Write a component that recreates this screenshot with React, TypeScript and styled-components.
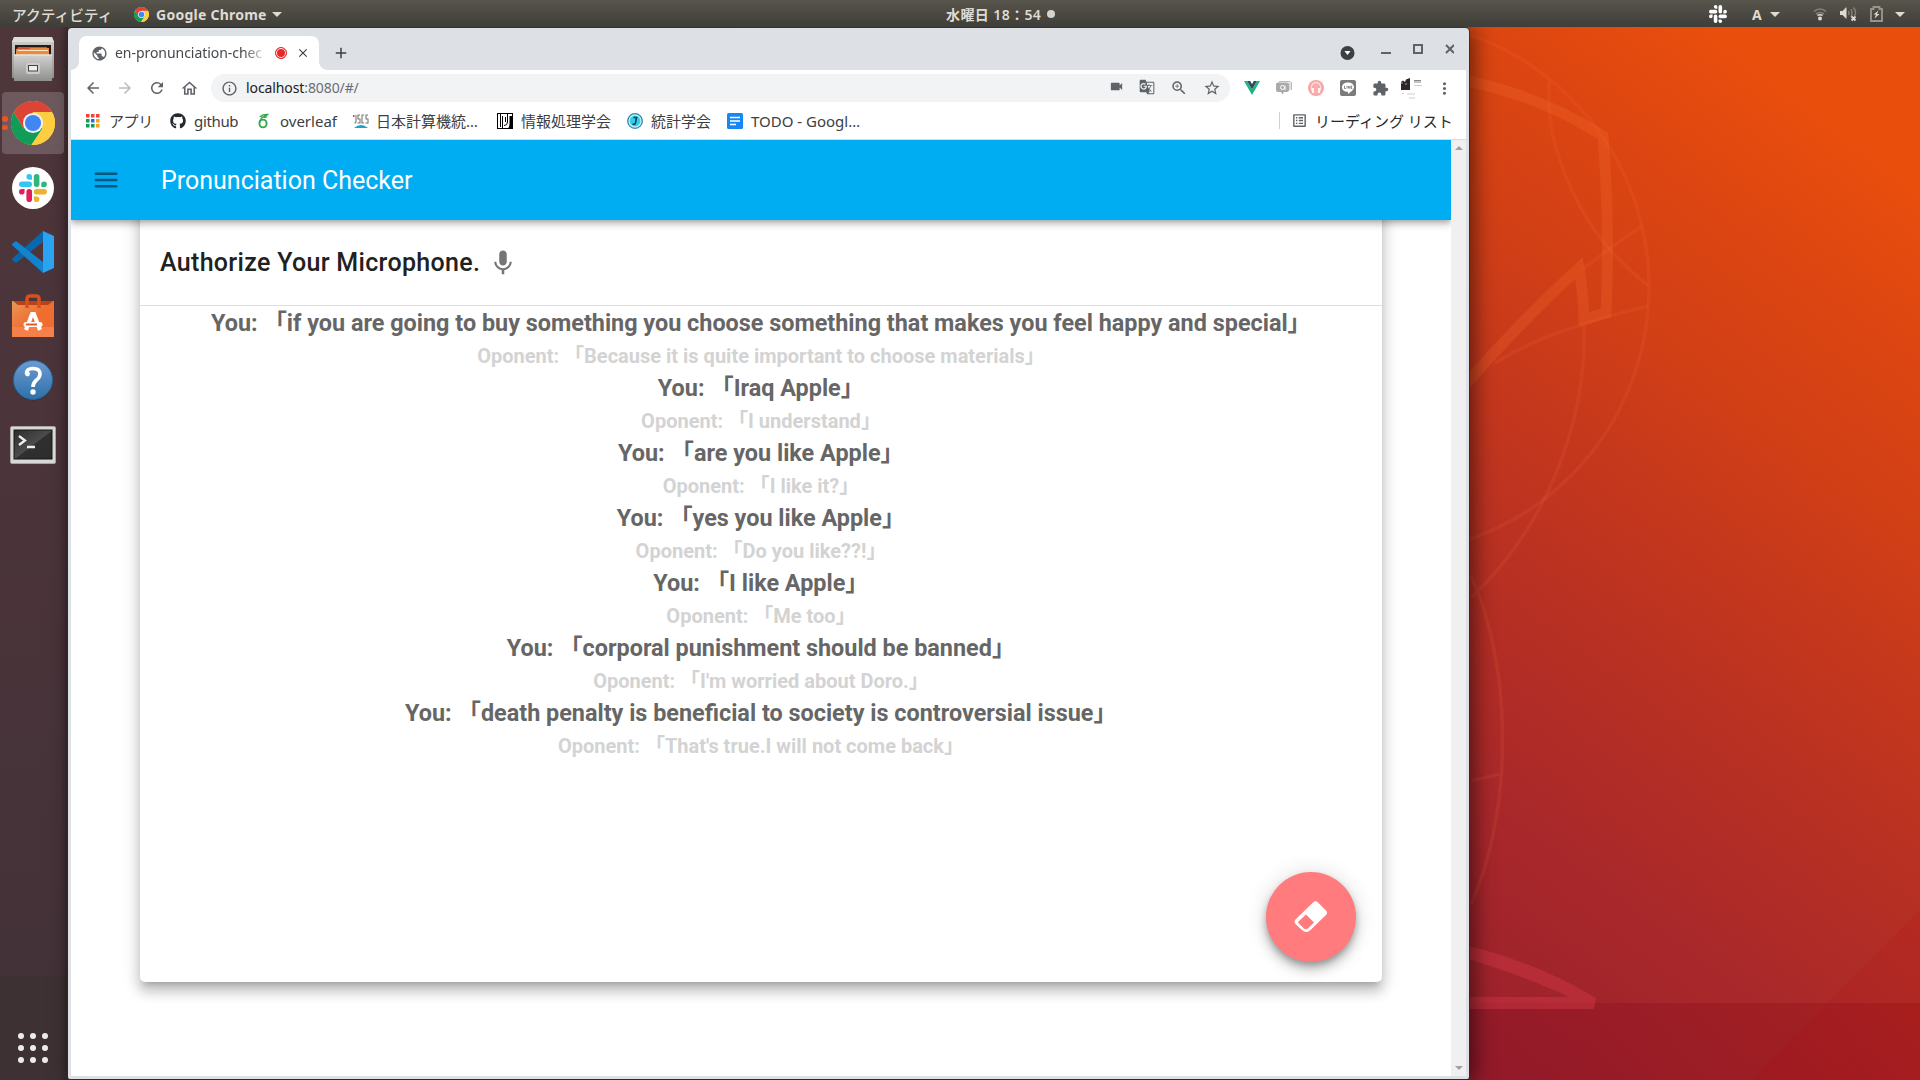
import React from "react";
import styled, { createGlobalStyle, css } from "styled-components";
import {
  MdArrowBack, MdArrowForward, MdRefresh, MdOutlineHome, MdInfoOutline, MdVideocam, MdGTranslate,
  MdZoomIn, MdStarBorder, MdExtension, MdMoreVert, MdMic, MdMenu, MdClose, MdAdd, MdPublic, MdOutlineListAlt,
} from "react-icons/md";
import { FaGithub } from "react-icons/fa";

const ui = `"Noto Sans", "Noto Sans CJK JP", sans-serif`;

const Global = createGlobalStyle`
  *, *::before, *::after { box-sizing: border-box; }
  body { margin: 0; overflow: hidden; background: #a8282a; }
  svg { display: block; flex: none; }
`;

const Desktop = styled.div`
  position: relative;
  width: 1920px;
  height: 1080px;
  overflow: hidden;
  display: flex;
  flex-direction: column;
  font-family: ${ui};
`;
const Backdrop = styled.svg`
  position: absolute;
  inset: 0;
`;

/* ---------- top panel ---------- */
const Panel = styled.header`
  position: relative;
  z-index: 3;
  height: 27px;
  flex: none;
  display: grid;
  grid-template-columns: 1fr auto 1fr;
  align-items: center;
  color: #dfdbd2;
  font-size: 14px;
  font-weight: 700;
  line-height: 27px;
  white-space: nowrap;
  background: linear-gradient(#58554c, #3e3d38);
`;
const PanelLeft = styled.div`
  display: flex;
  align-items: center;
  padding-left: 12px;
`;
const Activities = styled.span`
  width: 122px;
  font-size: 14.7px;
  font-weight: 500;
  font-family: "Noto Sans CJK JP", sans-serif;
`;
const AppName = styled.span`
  width: 116px;
  margin-left: 7px;
  font-size: 14px;
  letter-spacing: 0.25px;
`;
const Clock = styled.div`
  display: flex;
  align-items: center;
  width: 110px;
  margin-left: 82px;
  gap: 3px;
  font-size: 14px;
  font-weight: 600;
  letter-spacing: 0.4px;
`;
const ClockText = styled.span`
  width: 98px;
  padding-top: 1px;
`;
const ClockDot = styled.i`
  width: 8px;
  height: 8px;
  border-radius: 50%;
  background: #d6d3cc;
`;
const PanelRight = styled.div`
  display: flex;
  justify-content: flex-end;
  align-items: center;
  padding-right: 15px;
`;
const InputMode = styled.span`
  margin: 0 8px 0 25px;
  width: 10px;
`;
const Caret = styled.i`
  border: 5px solid transparent;
  border-top: 5px solid #dfdbd2;
  border-bottom: 0;
`;
const TrayGap = styled.span<{ $w: number }>`
  width: ${(p) => p.$w}px;
`;

/* ---------- dock ---------- */
const Body = styled.div`
  position: relative;
  flex: 1;
  display: flex;
  min-height: 0;
`;
const Dock = styled.nav`
  width: 68px;
  flex: none;
  display: flex;
  flex-direction: column;
  justify-content: space-between;
  padding-top: 1px;
  background: linear-gradient(90deg, transparent 60px, rgba(0, 0, 0, 0.16)),
    linear-gradient(#4f363a, #4a343a 50%, #433238 90%, #3e3133 90.3%, #3d3133);
`;
const DockList = styled.div`
  display: flex;
  flex-direction: column;
`;
const DockItem = styled.div<{ $active?: boolean }>`
  position: relative;
  width: 62px;
  height: 62px;
  margin: 0 0 2.3px 2px;
  border-radius: 4px;
  display: flex;
  align-items: center;
  justify-content: center;
  ${(p) => p.$active && css`background: rgba(255, 255, 255, 0.18);`}
`;
const RunDots = styled.span`
  position: absolute;
  left: 0;
  top: 24px;
  display: grid;
  gap: 3px;
  i {
    width: 5.5px;
    height: 5.5px;
    border-radius: 50%;
    background: #e95420;
  }
`;
const AllApps = styled.div`
  display: grid;
  grid-template-columns: repeat(3, 6px);
  gap: 6px;
  padding: 0 0 17px 18px;
  i {
    width: 6px;
    height: 6px;
    border-radius: 50%;
    background: #eeecea;
  }
`;

/* ---------- browser window ---------- */
const Window = styled.main`
  width: 1401px;
  height: 1051px;
  margin-top: 1px;
  flex: none;
  display: flex;
  flex-direction: column;
  padding: 0 3px 3px;
  background: #dde1e6;
  border-radius: 4px 4px 2px 2px;
  box-shadow: 0 0 0 1px rgba(40, 45, 45, 0.75), 4px 2px 20px 2px rgba(0, 0, 0, 0.5);
`;
const TabStrip = styled.div`
  height: 42px;
  flex: none;
  display: flex;
  align-items: flex-end;
  padding-left: 8px;
  color: #3c4043;
`;
const Tab = styled.div`
  position: relative;
  width: 240px;
  height: 34px;
  display: flex;
  align-items: center;
  padding: 0 9px 0 12px;
  background: #fff;
  border-radius: 8px 8px 0 0;
  &::before,
  &::after {
    content: "";
    position: absolute;
    bottom: 0;
    width: 8px;
    height: 8px;
  }
  &::before {
    left: -8px;
    background: radial-gradient(circle at 0 0, transparent 7.5px, #fff 8px);
  }
  &::after {
    right: -8px;
    background: radial-gradient(circle at 100% 0, transparent 7.5px, #fff 8px);
  }
`;
const TabTitle = styled.span`
  width: 155px;
  margin: 0 5px 0 7px;
  white-space: nowrap;
  font-size: 14px;
  letter-spacing: -0.05px;
  line-height: 20px;
  padding-bottom: 1px;
  color: #45494d;
  mask-image: linear-gradient(90deg, #000 128px, transparent 154px);
`;
const Recording = styled.i`
  width: 12px;
  height: 12px;
  flex: none;
  margin-right: 9px;
  border-radius: 50%;
  background: #e8282b;
  border: 1px solid #e8282b;
  box-shadow: inset 0 0 0 1px #fff;
`;
const NewTab = styled.div`
  height: 34px;
  display: flex;
  align-items: center;
  margin-left: 13px;
`;
const WindowButtons = styled.div`
  height: 42px;
  margin-left: auto;
  display: flex;
  align-items: center;
  padding-right: 12px;
`;
const Toolbar = styled.div`
  height: 35px;
  flex: none;
  display: flex;
  align-items: center;
  background: #fff;
  color: #5f6368;
  padding: 1px 5px 0 13px;
`;
const NavIcons = styled.div`
  display: flex;
  flex: none;
  width: 127px;
  gap: 14px;
`;
const Omnibox = styled.div`
  width: 1019px;
  flex: none;
  height: 28px;
  border-radius: 14px;
  background: #f1f3f4;
  display: flex;
  align-items: center;
  padding: 0 9px 0 10px;
`;
const Url = styled.span`
  margin-left: 8px;
  padding-bottom: 1px;
  font-size: 14px;
  letter-spacing: -0.1px;
  color: #6b6f74;
  b {
    font-weight: 400;
    color: #202124;
  }
`;
const OmniActions = styled.div`
  display: flex;
  gap: 15px;
  margin-left: auto;
`;
const Extensions = styled.div`
  display: flex;
  margin-left: 6px;
`;
const Slot = styled.span`
  width: 32px;
  height: 24px;
  display: flex;
  align-items: center;
  justify-content: center;
`;
const Bookmarks = styled.div`
  height: 35px;
  flex: none;
  display: flex;
  align-items: center;
  padding: 0 15px 3px;
  background: #fff;
  border-bottom: 1px solid #dadce0;
  font-size: 15px;
  color: #3c4043;
  white-space: nowrap;
`;
const Bookmark = styled.div<{ $w: number; $gap?: number; $track?: number }>`
  width: ${(p) => p.$w}px;
  flex: none;
  display: flex;
  align-items: center;
  gap: ${(p) => p.$gap ?? 8}px;
  letter-spacing: ${(p) => p.$track ?? 0}px;
  line-height: 20px;
`;
const ReadingList = styled.div`
  display: flex;
  align-items: center;
  margin-left: auto;
  width: 172px;
  gap: 7px;
  padding-left: 11px;
  border-left: 1px solid #cfd1d4;
  line-height: 16px;
  color: #26292c;
`;

/* ---------- page ---------- */
const Page = styled.div`
  flex: 1;
  min-height: 0;
  display: flex;
  background: #fff;
`;
const View = styled.div`
  width: 1380px;
  overflow: hidden;
  font-family: Roboto, "Noto Sans CJK JP", sans-serif;
`;
const AppBar = styled.div`
  position: relative;
  z-index: 1;
  height: 80px;
  display: flex;
  align-items: center;
  padding-left: 20px;
  gap: 40px;
  background: #00adf2;
  color: #fff;
  font-size: 25px;
  box-shadow: 0 2px 5px -1px rgba(0, 0, 0, 0.2), 0 5px 6px rgba(0, 0, 0, 0.14), 0 1px 12px rgba(0, 0, 0, 0.12);
`;
const Card = styled.section`
  width: 1242px;
  height: 802px;
  margin: -40px 0 0 69px;
  padding-top: 40px;
  background: #fff;
  border-radius: 5px;
  display: flex;
  flex-direction: column;
  box-shadow: 0 6px 6px -4px rgba(0, 0, 0, 0.2), 0 10px 12px 1px rgba(0, 0, 0, 0.14), 0 4px 17px 3px rgba(0, 0, 0, 0.12);
`;
const CardHead = styled.h1`
  height: 86px;
  margin: 0;
  display: flex;
  align-items: center;
  gap: 8px;
  padding: 0 20px 0 20px;
  border-bottom: 1px solid #dfdfdf;
  font-size: 25px;
  font-weight: 500;
  letter-spacing: 0.32px;
  color: #212121;
`;
const Log = styled.div`
  flex: 1;
  text-align: center;
  font-weight: 700;
  white-space: nowrap;
`;
const You = styled.p`
  margin: 0;
  height: 34px;
  line-height: 34px;
  font-size: 23.4px;
  color: #666;
`;
const Opponent = styled.p`
  margin: 0;
  height: 31px;
  line-height: 33px;
  font-size: 20px;
  color: #d3d3d3;
`;
const Fab = styled.button`
  align-self: flex-end;
  width: 90px;
  height: 90px;
  margin: 0 26px 20px 0;
  padding: 0;
  border: 0;
  border-radius: 50%;
  background: #ff7b7e;
  display: flex;
  align-items: center;
  justify-content: center;
  box-shadow: 0 4px 6px -1px rgba(0, 0, 0, 0.25), 0 8px 12px rgba(0, 0, 0, 0.18), 0 1px 22px rgba(0, 0, 0, 0.14);
`;
const Scrollbar = styled.div`
  width: 15px;
  background: #f0f0f0;
  display: flex;
  flex-direction: column;
  justify-content: space-between;
  align-items: center;
  padding: 6px 0;
`;
const Arrow = styled.i<{ $up?: boolean }>`
  border: 4px solid transparent;
  ${(p) => (p.$up ? "border-bottom-color:#a0a0a0;border-top:0;" : "border-top-color:#a0a0a0;border-bottom:0;")}
`;

/* ---------- drawings ---------- */
const ChromeLogo = ({ s }: { s: number }) => (
  <svg width={s} height={s} viewBox="0 0 48 48">
    <circle cx="24" cy="24" r="24" fill="#ffcd40" />
    <path d="M24 24 13.6 30 3.2 12A24 24 0 0 0 22 48L34.4 30Z" fill="#0f9d58" />
    <path d="M24 12H44.8A24 24 0 0 0 3.2 12L13.6 30Z" fill="#db4437" />
    <path d="M24 13H45.3A24 24 0 0 1 23 48L34.8 29Z" fill="#ffcd40" />
    <circle cx="24" cy="24" r="11" fill="#f1f1f1" />
    <circle cx="24" cy="24" r="8.8" fill="#4285f4" />
  </svg>
);

const SlackMark = ({ s, mono }: { s: number; mono?: boolean }) => {
  const c = mono ? ["#fff", "#fff", "#fff", "#fff"] : ["#36c5f0", "#2eb67d", "#ecb22e", "#e01e5a"];
  return (
    <svg width={s} height={s} viewBox="0 0 54 54">
      <path fill={c[0]} d="M19.7.1a5.4 5.4 0 1 0 0 10.8h5.4V5.5A5.4 5.4 0 0 0 19.7.1m0 14.4H5.4a5.4 5.4 0 0 0 0 10.8h14.3a5.4 5.4 0 0 0 0-10.8" />
      <path fill={c[1]} d="M53.8 19.9a5.4 5.4 0 1 0-10.8 0v5.4h5.4a5.4 5.4 0 0 0 5.4-5.4m-14.4 0V5.5a5.4 5.4 0 0 0-10.8 0v14.4a5.4 5.4 0 0 0 10.8 0" />
      <path fill={c[2]} d="M34 54a5.4 5.4 0 1 0 0-10.8h-5.4v5.4A5.4 5.4 0 0 0 34 54m0-14.4h14.4a5.4 5.4 0 0 0 0-10.8H34a5.4 5.4 0 0 0 0 10.8" />
      <path fill={c[3]} d="M0 34.2a5.4 5.4 0 1 0 10.8 0v-5.4H5.4A5.4 5.4 0 0 0 0 34.2m14.3 0v14.4a5.4 5.4 0 0 0 10.8 0V34.2a5.4 5.4 0 0 0-10.8 0" />
    </svg>
  );
};

const FilesIcon = () => (
  <svg width="44" height="46" viewBox="0 0 44 46">
    <defs>
      <linearGradient id="cab" x1="0" y1="0" x2="0" y2="1"><stop offset="0" stopColor="#d2d2d0" /><stop offset="1" stopColor="#8f8f8d" /></linearGradient>
    </defs>
    <path d="M3 1H41L43 6V42H1V6Z" fill="url(#cab)" />
    <path d="M3 1H41L43 6H1Z" fill="#dededd" />
    <rect x="4" y="9" width="36" height="11" fill="#241c1a" />
    <path d="M7 11H36V18H5V14Z" fill="#d8502a" /><path d="M5 13H18L20 12H38V19H5Z" fill="#eb8a3c" /><path d="M7 14.5H37" stroke="#fbe6c8" />
    <rect x="3" y="18.500" width="38" height="26.500" fill="url(#cab)" />
    <path d="M3 19H41" stroke="#eee" />
    <rect x="15" y="27" width="14" height="11" rx="2" fill="#ccc" /><rect x="17.500" y="29.500" width="9" height="5.500" fill="#eee" stroke="#444" />
  </svg>
);

const CodeIcon = () => (
  <svg width="42" height="42" viewBox="0 0 42 42">
    <path d="M0 29 4 32 31 11V0L1 27Z" fill="#0868ad" />
    <path d="M0 13 4 10 31 31V42L1 15Q-.5 14 0 13" fill="#1283cd" />
    <path d="M31 0 42 5V37L31 42Z" fill="#2aa3f3" />
  </svg>
);

const StoreIcon = () => (
  <svg width="42" height="44" viewBox="0 0 42 44">
    <defs><linearGradient id="bag" x1="0" y1="0" x2="1" y2="1"><stop stopColor="#e7995a" /><stop offset=".5" stopColor="#ef6e2f" /><stop offset="1" stopColor="#ee6b30" /></linearGradient></defs>
    <path d="M0 7H42V43H0Z" fill="url(#bag)" /><path d="M1 7H41L36 11H6Z" fill="#b8421a" />
    <path d="M0 33H42V43H0Z" fill="#f58049" />
    <path d="M15 14V5Q15 2 18 2H24Q27 2 27 5V14" fill="none" stroke="#d9501c" strokeWidth="3.500" />
    <path d="M14 36 20 20H22L28 36" fill="none" stroke="#fff" strokeWidth="4" />
    <rect x="11.500" y="28" width="19" height="5" rx="2.500" fill="#fff" /><path d="M14 30.500H25" stroke="#e95b20" strokeWidth="2" />
  </svg>
);

const HelpIcon = () => (
  <svg width="42" height="42" viewBox="0 0 42 42">
    <defs><linearGradient id="hlp" x1="0" y1="0" x2="0" y2="1"><stop stopColor="#6d9bd2" /><stop offset="1" stopColor="#2d70a8" /></linearGradient></defs>
    <circle cx="21" cy="22" r="19.500" fill="rgba(0,0,0,.25)" />
    <circle cx="21" cy="21" r="19.500" fill="url(#hlp)" stroke="#28659a" />
    <path d="M14.500 15Q14 9.500 21 9.500Q28 9.500 28 15Q28 18.500 24 21.500Q21 24 21 28" fill="none" stroke="#fff" strokeWidth="3.600" />
    <circle cx="15.500" cy="15" r="2.400" fill="#fff" /><circle cx="21" cy="33" r="2.700" fill="#fff" />
  </svg>
);

const TerminalIcon = () => (
  <svg width="46" height="38" viewBox="0 0 46 38">
    <defs><linearGradient id="trm" x1="0" y1="0" x2="1" y2="1"><stop stopColor="#2c2c2c" /><stop offset=".5" stopColor="#4c4c4c" /><stop offset=".52" stopColor="#303030" /><stop offset="1" stopColor="#2c2c2c" /></linearGradient></defs>
    <rect x=".5" y=".5" width="45" height="37" rx="1.500" fill="#d8d8d6" stroke="#a5a5a3" />
    <rect x="4" y="4" width="38" height="29" fill="url(#trm)" stroke="#161616" />
    <path d="M9 10 15 14.500 9 19M17 21H25" fill="none" stroke="#eee" strokeWidth="2.300" />
  </svg>
);

const AppsGrid = () => (
  <svg width="14" height="14" viewBox="0 0 14 14">
    {["#f44336", "#f44336", "#f44336", "#0f9d58", "#1a73e8", "#f4a222", "#0f9d58", "#0f9d58", "#f4a222"].map((c, i) => (
      <rect key={i} x={(i % 3) * 5} y={Math.floor(i / 3) * 5} width="3.500" height="3.500" fill={c} />
    ))}
  </svg>
);
const OverleafIcon = () => (
  <svg width="16" height="16" viewBox="0 0 16 16" fill="none" stroke="#35a74c" strokeWidth="1.900">
    <ellipse cx="7" cy="10.500" rx="3.600" ry="3.900" /><path d="M3.400 10Q4 4 12.500 1.500Q7 1 4.500 3.500Q9 5 11 3.500" strokeWidth="1.300" />
  </svg>
);
const JscsIcon = () => (
  <svg width="16" height="16" viewBox="0 0 16 16" fill="none">
    <path d="M3 2V9Q3 10 1.500 10M7 2H5V6H7V10H4.500M11 2H9V10H11M15 2H13V6H15V10H12.500" stroke="#777" strokeWidth="1.100" />
    <rect y="2" width="1.500" height="2" fill="#f33" /><path d="M1 15Q8 9 15 15Z" fill="#18a4cf" />
  </svg>
);
const IpsjIcon = () => (
  <svg width="16" height="16" viewBox="0 0 16 16">
    <rect x=".5" y=".5" width="15" height="15" fill="#fff" stroke="#000" />
    <path d="M3.500 1V14M5.500 3V15M8.500 4V9M10.500 1V9Q10.500 12.500 7 12.500" fill="none" stroke="#000" /><path d="M12.500 3H16V16H10.500Q12.500 14 12.500 11Z" />
  </svg>
);
const StatIcon = () => (
  <svg width="16" height="16" viewBox="0 0 16 16">
    <circle cx="8" cy="8" r="7.300" fill="#c8f4f8" stroke="#2a86b4" strokeWidth="1.300" /><circle cx="8" cy="8" r="5.400" fill="#35cfe6" />
    <path d="M6.500 4.500H10.500M9.500 4.500 8.500 10Q8 12 5.500 11" fill="none" stroke="#0b3d62" strokeWidth="1.500" />
  </svg>
);
const DocsIcon = () => (
  <svg width="16" height="16" viewBox="0 0 16 16">
    <rect width="16" height="16" rx="1.500" fill="#1687f5" /><path d="M3 4.500H13M3 8H13M3 11.500H9" stroke="#fff" strokeWidth="1.500" />
  </svg>
);

const Wallpaper = () => (
  <Backdrop width="1920" height="1080" viewBox="0 0 1920 1080">
    <defs>
      <linearGradient id="bg" gradientUnits="userSpaceOnUse" x1="1600" y1="1200" x2="2200" y2="400">
        <stop offset="0" stopColor="#9a1f2e" />
        <stop offset=".09" stopColor="#9e222c" />
        <stop offset=".26" stopColor="#a9282a" />
        <stop offset=".46" stopColor="#b93122" />
        <stop offset=".58" stopColor="#c4371d" />
        <stop offset=".72" stopColor="#d13f16" />
        <stop offset=".87" stopColor="#dd4611" />
        <stop offset="1" stopColor="#e94e0d" />
      </linearGradient>
      <linearGradient id="floor" x1="0" y1="0" x2="1" y2="0">
        <stop offset="0" stopColor="#7c0a24" stopOpacity=".3" />
        <stop offset="1" stopColor="#90080c" stopOpacity=".28" />
      </linearGradient>
    </defs>
    <rect width="1920" height="1080" fill="url(#bg)" />
    <path d="M1440 1003H1920V1080H1440Z" fill="url(#floor)" />
    <path d="M1920 910V1080H1750Z" fill="#b00008" opacity=".09" />
    <g fill="none" stroke="#ff7048" strokeOpacity=".12" strokeWidth="3.500">
      <circle cx="1382" cy="287" r="267" />
      <path d="M1549 81V105C1552 165 1587 226 1614 254Q1630 271 1648 286" />
      <path d="M1642 226 1613 246 1583 269M1648 306 1606 317 1575 327Q1530 341 1495 363" />
      <path d="M1584 325C1587 420 1548 525 1471 598M1471 576C1510 660 1516 800 1471 905M1471 781 1499 774" />
    </g>
    <path d="M1465 80.500Q1541 96 1603 136Q1610 226 1606 313L1584 319Q1583 291 1579 268Q1525 317 1465 385" fill="none" stroke="#ff7838" strokeOpacity=".2" strokeWidth="11" />
    <path d="M1465 945Q1536 962 1596 998L1594 1009H1465V997H1569Q1525 976 1465 958Z" fill="#c5323f" opacity=".6" />
  </Backdrop>
);

const dialog: [string, string][] = [
  ["if you are going to buy something you choose something that makes you feel happy and special", "Because it is quite important to choose materials"],
  ["Iraq Apple", "I understand"],
  ["are you like Apple", "I like it?"],
  ["yes you like Apple", "Do you like??!"],
  ["I like Apple", "Me too"],
  ["corporal punishment should be banned", "I'm worried about Doro."],
  ["death penalty is beneficial to society is controversial issue", "That's true.I will not come back"],
];

export default function App() {
  return (
    <Desktop>
      <Global />
      <Wallpaper />
      <Panel>
        <PanelLeft>
          <Activities>アクティビティ</Activities>
          <ChromeLogo s={15} />
          <AppName>Google Chrome</AppName>
          <Caret />
        </PanelLeft>
        <Clock><ClockText>水曜日 18：54</ClockText><ClockDot /></Clock>
        <PanelRight>
          <SlackMark s={18} mono />
          <InputMode>A</InputMode>
          <Caret />
          <TrayGap $w={33} />
          <svg width="14" height="14" viewBox="0 0 14 14" fill="none">
            <path d="M1 4.500Q7-.5 13 4.500M3 7Q7 4 11 7" stroke="#85837c" strokeWidth="1.600" /><path d="M4.500 8.500Q7 7 9.500 8.500" stroke="#dfdbd2" strokeWidth="1.500" /><circle cx="7" cy="11.500" r="2" fill="#dfdbd2" />
          </svg>
          <TrayGap $w={13} />
          <svg width="17" height="16" viewBox="0 0 17 16" fill="none">
            <path d="M0 5H2.500L6.500 1V13L2.500 9H0Z" fill="#dfdbd2" /><path d="M8.500 5Q9.500 7 8.500 9M11 3Q13 7 11 11M13.500 1.500Q17 6 14.500 10" stroke="#85837c" strokeWidth="1.400" /><path d="M11.500 10.500 15.500 14.500M15.500 10.500 11.500 14.500" stroke="#dfdbd2" strokeWidth="1.800" />
          </svg>
          <TrayGap $w={13} />
          <svg width="13" height="16" viewBox="0 0 13 16"><path d="M1 3H3.500V1H9.500V3H12V15H1Z" fill="none" stroke="#96948c" strokeWidth="1.900" /><path d="M8.500 4.500 3.500 8.500H6L4.500 12.500 9.500 8H7Z" fill="#dfdbd2" /></svg>
          <TrayGap $w={12} />
          <Caret />
        </PanelRight>
      </Panel>
      <Body>
        <Dock>
          <DockList>
            <DockItem><FilesIcon /></DockItem>
            <DockItem $active><RunDots><i /><i /></RunDots><ChromeLogo s={44} /></DockItem>
            <DockItem>
              <svg width="42" height="42" viewBox="0 0 42 42"><circle cx="21" cy="21" r="21" fill="#fff" /><g transform="translate(7 7)"><SlackMark s={28} /></g></svg>
            </DockItem>
            <DockItem><CodeIcon /></DockItem>
            <DockItem><StoreIcon /></DockItem>
            <DockItem><HelpIcon /></DockItem>
            <DockItem><TerminalIcon /></DockItem>
          </DockList>
          <AllApps>{Array.from({ length: 9 }, (_, i) => <i key={i} />)}</AllApps>
        </Dock>
        <Window>
          <TabStrip>
            <Tab>
              <MdPublic size={17} color="#5f6368" />
              <TabTitle>en-pronunciation-chec</TabTitle>
              <Recording />
              <MdClose size={14} />
            </Tab>
            <NewTab><MdAdd size={18} /></NewTab>
            <WindowButtons>
              <svg width="114" height="24" viewBox="0 0 114 24" fill="none" stroke="#5f6368">
                <circle cx="7.500" cy="16" r="7" fill="#3c4043" stroke="none" /><path d="M4.500 14H10.500L7.500 18Z" fill="#fff" stroke="none" />
                <path d="M41 16H51" strokeWidth="2" /><rect x="74" y="8" width="8" height="8" strokeWidth="2" /><path d="M106 8 114 16M114 8 106 16" strokeWidth="2" />
              </svg>
            </WindowButtons>
          </TabStrip>
          <Toolbar>
            <NavIcons>
              <MdArrowBack size={18} /><MdArrowForward size={18} color="#babcbe" /><MdRefresh size={18} /><MdOutlineHome size={19} />
            </NavIcons>
            <Omnibox>
              <MdInfoOutline size={17} />
              <Url><b>localhost</b>:8080/#/</Url>
              <OmniActions><MdVideocam size={15} /><MdGTranslate size={16} /><MdZoomIn size={18} /><MdStarBorder size={18} /></OmniActions>
            </Omnibox>
            <Extensions>
              <Slot><svg width="16" height="14" viewBox="0 0 16 14"><path d="M0 0H3.200L8 8.300 12.800 0H16L8 14Z" fill="#1fb57e" /><path d="M3.200 0H6.200L8 3.200 9.800 0H12.800L8 8.300Z" fill="#2f4460" /></svg></Slot>
              <Slot><svg width="16" height="16" viewBox="0 0 16 16"><path d="M2 2.500H11Q13 2.500 13 4.500V10Q13 12 11 12H8L6.500 14.500 5 12H2Q0 12 0 10V4.500Q0 2.500 2 2.500" fill="#aaa" /><path d="M3 1.500H14V10" fill="none" stroke="#bbb" /><path d="M15.500 2V10" stroke="#bbb" /><circle cx="6.500" cy="7.500" r="2" fill="none" stroke="#fff" /><path d="M9 5.500V10" stroke="#fff" /></svg></Slot>
              <Slot><svg width="16" height="16" viewBox="0 0 16 16"><circle cx="8" cy="8" r="8" fill="#f9a5a5" /><path d="M3.500 9V7A4.500 4.500 0 0 1 12.500 7V9" fill="none" stroke="#fde0e0" strokeWidth="1.300" /><path d="M3 8H6V13H4ZM10 8H13L12 13H10Z" fill="#fff1f1" /><path d="M7 3V14M9 3V14" stroke="#fbc4c4" strokeWidth=".7" /></svg></Slot>
              <Slot><svg width="16" height="16" viewBox="0 0 16 16"><rect width="16" height="16" rx="2" fill="#7b7b7b" /><path d="M8 2.500C11.500 2.500 14 4.500 14 7.300C14 9.500 11 12 8 14V11.800C4.500 11.800 2 10 2 7.200C2 4.500 4.500 2.500 8 2.500" fill="#fff" /><path d="M4.500 5.800V8.500H6M7 5.800V8.500M8.300 8.500V6L9.800 8.500V6M12.300 6H11V8.400H12.300M11 7.200H12" stroke="#777" strokeWidth=".8" fill="none" /></svg></Slot>
              <Slot><MdExtension size={17} /></Slot>
              <Slot><svg width="22" height="22" viewBox="0 0 22 22"><path d="M0 5 2 3.500 4 5 5 2.500 9 1V13H0Z" fill="#2c2627" /><path d="M0 6H2M5 6V8" stroke="#b9a08c" /><path d="M13 3.500H20M13 5H20" stroke="#888" /><path d="M13 8.500H21M1 16.500H3M6 17H14M8 21H14" stroke="#ccc" /></svg></Slot>
              <Slot><MdMoreVert size={19} /></Slot>
            </Extensions>
          </Toolbar>
          <Bookmarks>
            <Bookmark $w={84} $gap={9} $track={-0.4}><AppsGrid />アプリ</Bookmark>
            <Bookmark $w={86} $track={-0.35}><FaGithub size={16} color="#24292e" />github</Bookmark>
            <Bookmark $w={97}><OverleafIcon />overleaf</Bookmark>
            <Bookmark $w={144} $gap={7}><JscsIcon />日本計算機統…</Bookmark>
            <Bookmark $w={130}><IpsjIcon />情報処理学会</Bookmark>
            <Bookmark $w={100}><StatIcon />統計学会</Bookmark>
            <Bookmark $w={140}><DocsIcon />TODO - Googl…</Bookmark>
            <ReadingList><MdOutlineListAlt size={17} color="#5f6368" />リーディング リスト</ReadingList>
          </Bookmarks>
          <Page>
            <View>
              <AppBar>
                <MdMenu size={30} color="#01597f" />
                <span>Pronunciation Checker</span>
              </AppBar>
              <Card>
                <CardHead>Authorize Your Microphone.<MdMic size={30} color="#757575" /></CardHead>
                <Log>
                  {dialog.map(([you, reply]) => (
                    <React.Fragment key={you}>
                      <You>You: 「{you}」</You>
                      <Opponent>Oponent: 「{reply}」</Opponent>
                    </React.Fragment>
                  ))}
                </Log>
                <Fab aria-label="clear">
                  <svg width="34" height="32" viewBox="0 0 34 32">
                    <path d="M19 1.500Q21.500-1 24 1.500L32 9.500Q34 11.500 32 14L16.500 29Q12 33 8 29L2 23.500Q-1 20.500 2 18Z" fill="#fff" />
                    <path d="M12 13.500 20 21.500 14.500 27Q12 29.500 9.500 27L4.500 22Q3.500 21.500 4.500 20.500Z" fill="#ff7b7e" />
                  </svg>
                </Fab>
              </Card>
            </View>
            <Scrollbar><Arrow $up /><Arrow /></Scrollbar>
          </Page>
        </Window>
      </Body>
    </Desktop>
  );
}
